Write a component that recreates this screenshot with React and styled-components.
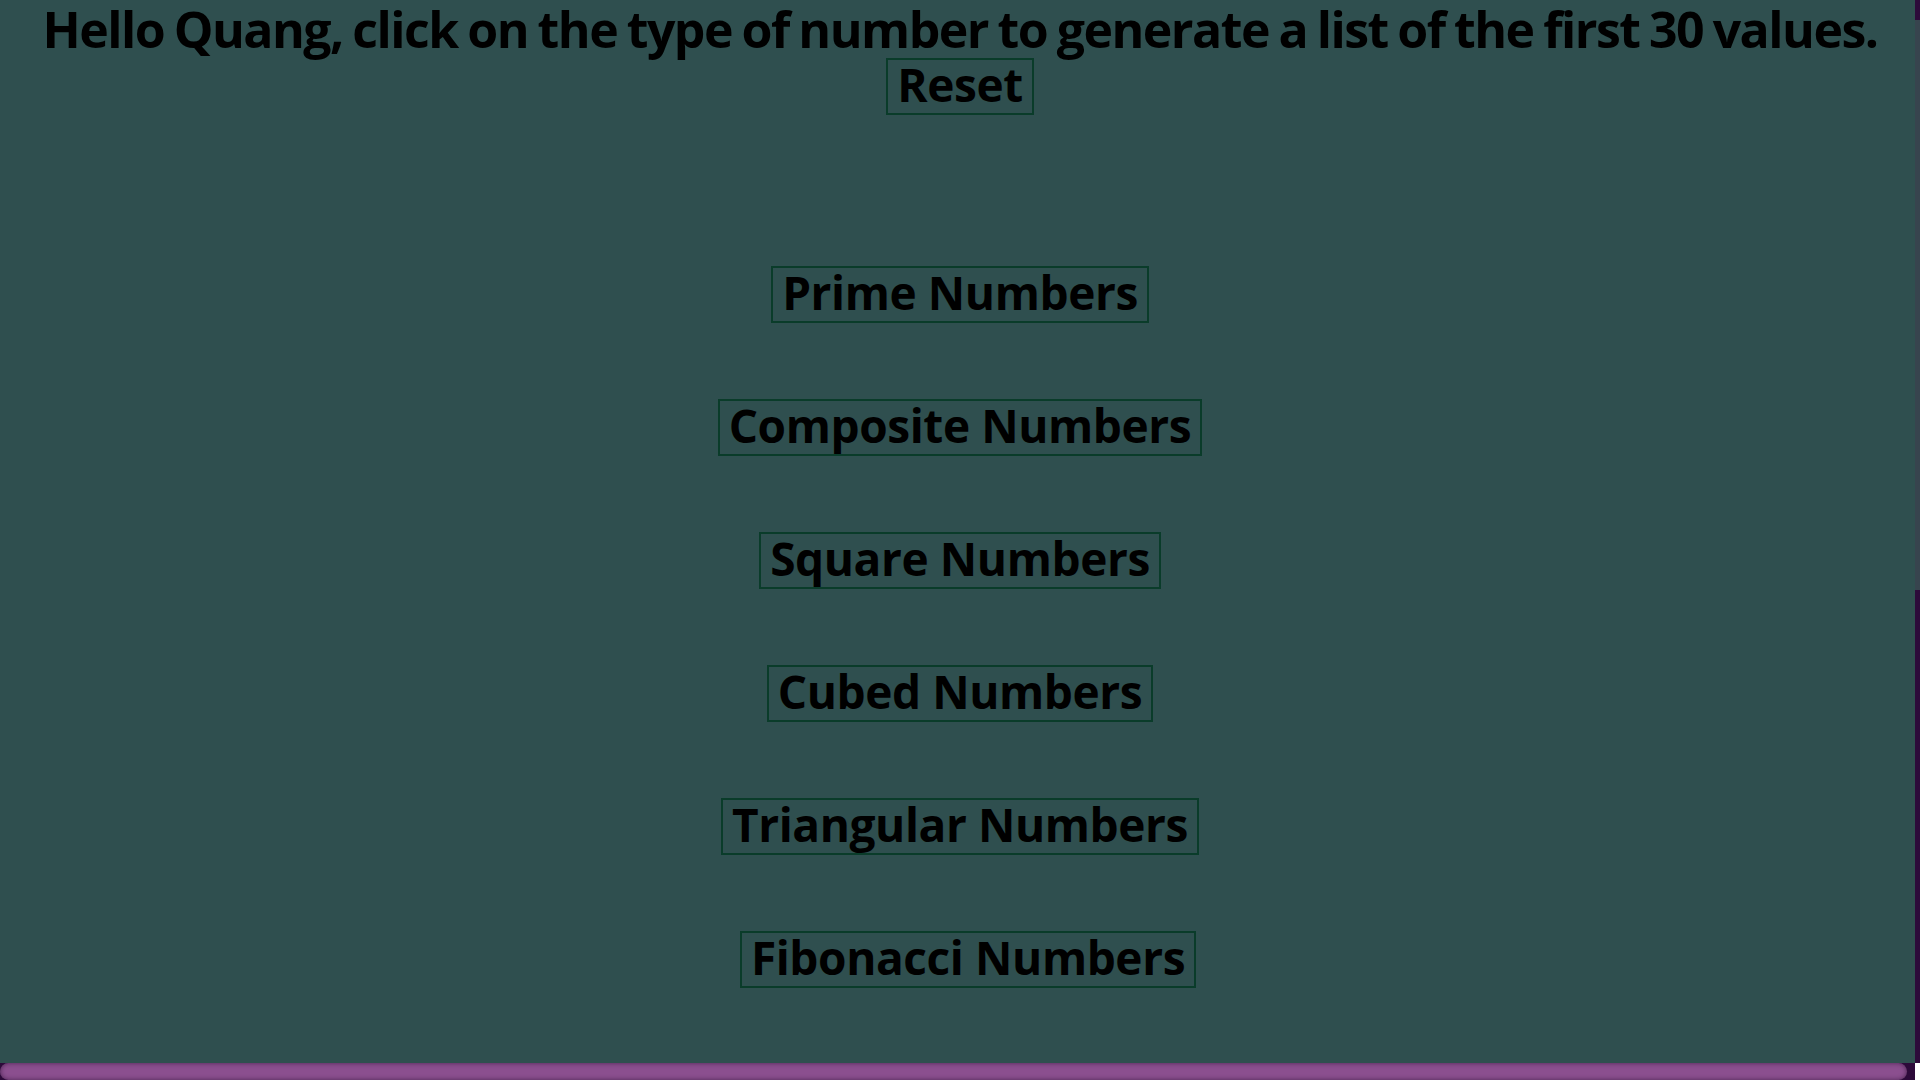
import React from "react";
import styled, { createGlobalStyle } from "styled-components";

const GlobalStyle = createGlobalStyle`
  html {
    background-color: #2f4f4f;
    overflow: hidden;
  }
  body {
    margin: 0 8px 8px;
    background-color: #2f4f4f;
    font-family: "Open Sans", "Noto Sans", sans-serif;
    color: #000;
  }
`;

const types = [
  "Prime Numbers",
  "Composite Numbers",
  "Square Numbers",
  "Cubed Numbers",
  "Triangular Numbers",
];

const App = () => {
  return (
    <>
      <GlobalStyle />
      <Page>
        <Title>
          Hello Quang, click on the type of number to generate a list of the
          first 30 values.
        </Title>
        <Toolbar>
          <TypeButton>Reset</TypeButton>
        </Toolbar>
        <TypeList>
          {types.map((t) => (
            <TypeButton key={t}>{t}</TypeButton>
          ))}
          <TypeButton $shift>Fibonacci Numbers</TypeButton>
        </TypeList>
      </Page>
      {/* page scrollbars as the browser drew them */}
      <ScrollTrackY>
        <ScrollThumbY />
      </ScrollTrackY>
      <ScrollTrackX>
        <ScrollThumbX />
      </ScrollTrackX>
      <ScrollCorner />
    </>
  );
};

const Page = styled.div`
  display: flex;
  flex-direction: column;
`;

const Title = styled.h1`
  margin: 0;
  padding-top: 4px;
  font-size: 50px;
  font-weight: 700;
  letter-spacing: -1.5px;
  word-spacing: -2px;
  line-height: 50px;
  text-align: center;
  white-space: nowrap;
`;

const Toolbar = styled.div`
  display: flex;
  justify-content: center;
  margin-top: 4px;
`;

const TypeList = styled.div`
  display: flex;
  flex-direction: column;
  align-items: center;
  gap: 76px;
  margin-top: 151px;
`;

const TypeButton = styled.button`
  font-family: "Open Sans", "Noto Sans", sans-serif;
  font-size: 46px;
  font-weight: 700;
  letter-spacing: -0.4px;
  line-height: 49px;
  color: #000;
  background: transparent;
  border: 2px solid #0a3c2a;
  border-radius: 0;
  padding: 0 9px 4px;
  margin-left: ${(p) => (p.$shift ? "16px" : "0")};
  cursor: pointer;
`;

const ScrollTrackY = styled.div`
  position: fixed;
  top: 0;
  right: 0;
  bottom: 17px;
  width: 5px;
  background: #2d0a3a;
  padding-top: 20px;
`;

const ScrollThumbY = styled.div`
  height: 570px;
  background: #37444e;
`;

const ScrollTrackX = styled.div`
  position: fixed;
  left: 0;
  right: 5px;
  bottom: 0;
  height: 17px;
  background: #2d0a3a;
  padding-right: 8px;
  display: flex;
`;

const ScrollThumbX = styled.div`
  flex: 1;
  background: #8b4f8f;
  border-radius: 9px;
  box-shadow: inset 0 0 5px rgba(20, 0, 30, 0.55);
`;

const ScrollCorner = styled.div`
  position: fixed;
  right: 0;
  bottom: 0;
  width: 5px;
  height: 17px;
  background: #fff;
`;

export default App;
